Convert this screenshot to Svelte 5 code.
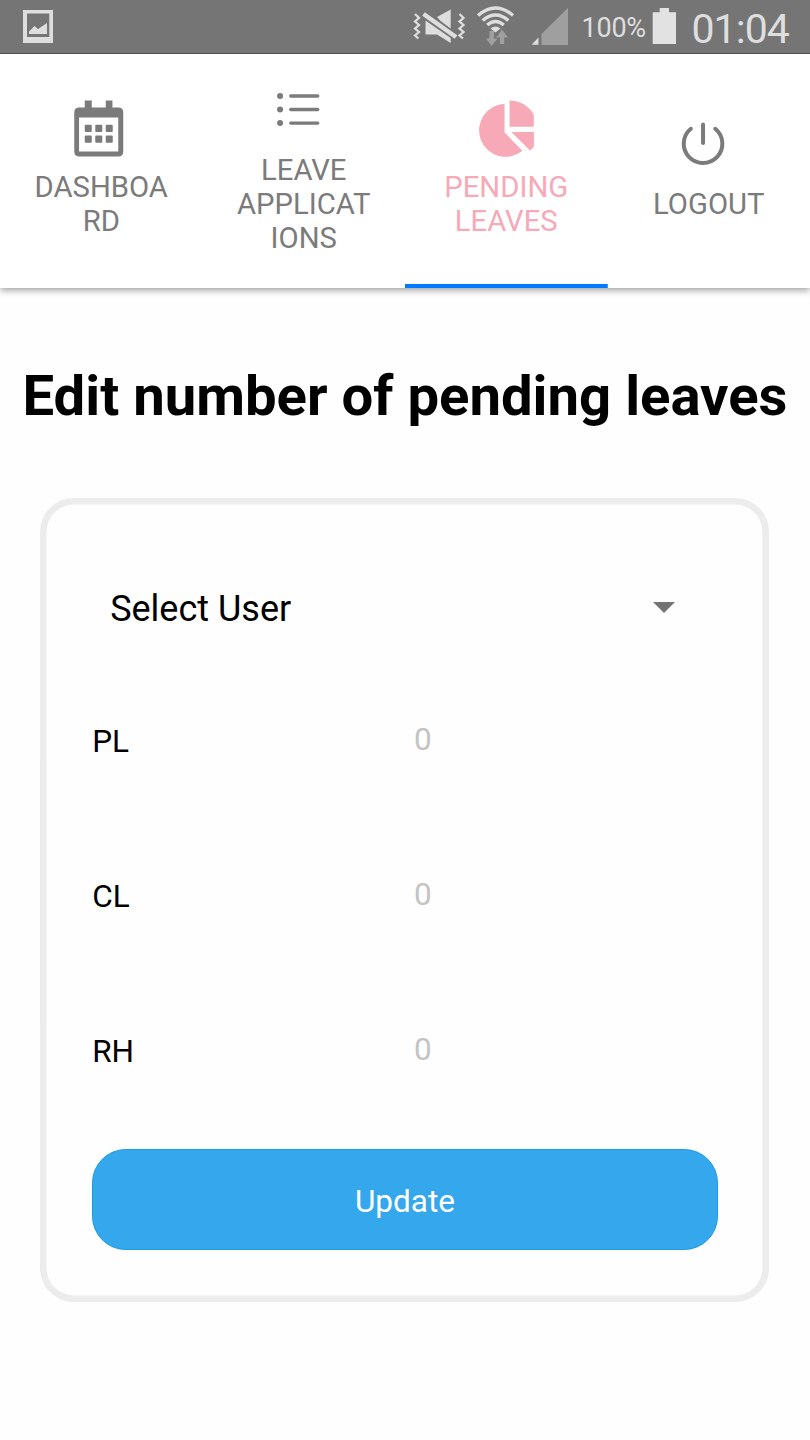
<script>
  const fields = ['PL', 'CL', 'RH'];
</script>

<div class="screen">
  <div class="status">
    <svg class="glyphs" viewBox="0 0 810 53" width="810" height="53">
      <path fill="#dedede" fill-rule="evenodd" d="M23 10H53V43H23ZM27 13.5V37H49.3V13.5Z" />
      <path fill="#dedede" d="M29 34V31.5L34.5 26L38 29L47 23V34Z" />
      <g fill="none" stroke="#dedede" stroke-width="2.300">
        <path d="M415 14L419 18L415 21.5L419 25L415 28.500L419 32L415 35.500L418.500 38.500" />
        <path d="M459.500 14L463.500 18L459.500 21.500L463.500 25L459.500 28.500L463.500 32L459.500 35.500L463 38.500" />
      </g>
      <path fill="#dedede" d="M437 17L450.700 9.500V29L444 25Z" />
      <path fill="#dedede" d="M425.500 20.500L450.700 38V43L437 34.500H425.500Z" />
      <path stroke="#757575" stroke-width="7" d="M426 14.500L455 36" />
      <path stroke="#dedede" stroke-width="4.500" d="M423.500 14L456 37" />
      <g fill="none" stroke="#dedede" stroke-width="3.400">
        <path d="M478 15.500Q495.500 0.500 513 15.500" />
        <path d="M482.700 20.500Q495.500 9.500 508.300 20.500" />
        <path d="M487.200 25Q495.500 18 503.800 25" />
      </g>
      <path fill="#dedede" d="M490.500 28.500Q495.500 24.500 500.500 28.500L495.500 32.500Z" />
      <path fill="#9f9f9f" d="M489.500 31H494V38.500H497.500L491.700 46L486 38.500H489.500ZM500 44V37.500H496.200L502 29.500L508 37.500H504.200V44Z" />
      <path fill="#9f9f9f" d="M541.500 45V34L568 8V45Z" />
      <path fill="#dedede" d="M531.500 44.700L538.500 37.500V44.700Z" />
      <path fill="#e2e2e2" d="M652.700 12.200H659.700V8H669V12.200H676V44H652.700Z" />
    </svg>
    <span class="percent">100%</span>
    <span class="clock">01:04</span>
  </div>

  <nav>
    <div class="tab">
      <svg viewBox="68.250 103.500 66 66">
        <path fill="#7b7b7b" fill-rule="evenodd" d="M85 100H92V107H106V100H112.700V107H118.500Q123.500 107 123.500 112V151Q123.500 156 118.500 156H79.500Q74.500 156 74.500 151V112Q74.500 107 79.500 107H85ZM79.300 117V151H118.500V117Z" />
        <g fill="#7b7b7b">
          {#each [85, 95.5, 106] as x}
            <rect {x} y="124.300" width="7" height="7.200" rx="1" />
            <rect {x} y="135" width="7" height="7.200" rx="1" />
          {/each}
        </g>
      </svg>
      <span>DASHBOA<br />RD</span>
    </div>
    <div class="tab">
      <svg viewBox="270.750 86.500 66 66">
        {#each [95.5, 109, 122.6] as y}
          <circle cx="279.800" cy={y} r="3" fill="#7b7b7b" />
          <path d="M290.500 {y}H317.500" stroke="#7b7b7b" stroke-width="3.300" stroke-linecap="round" />
        {/each}
      </svg>
      <span>LEAVE<br />APPLICAT<br />IONS</span>
    </div>
    <div class="tab active">
      <svg viewBox="472.650 104 66 66">
        <g fill="#f7a9b7">
          <path d="M504.200 103.800V132.500L522 150.800A26.500 26.500 0 1 1 504.200 103.800Z" />
          <path d="M509.200 100.500A27 27 0 0 1 533.500 115V126.700H509.200Z" />
          <path d="M511 132H533.500V146.500Q532 149 529.700 150.500Z" />
        </g>
      </svg>
      <span>PENDING<br />LEAVES</span>
    </div>
    <div class="tab">
      <svg viewBox="675.950 121.200 66 66">
        <path d="M690.800 129A19.300 19.300 0 1 0 715.200 129M703 124.800V143.300" fill="none" stroke="#7b7b7b" stroke-width="4" stroke-linecap="round" />
      </svg>
      <span>LOGOUT</span>
    </div>
  </nav>

  <h1>Edit number of pending leaves</h1>

  <div class="card">
    <div class="select">
      <span>Select User</span>
      <svg viewBox="0 0 22 11" width="22" height="11"><path d="M0 0H22L11 11Z" fill="#737373" /></svg>
    </div>
    {#each fields as name}
      <div class="row">
        <span class="name">{name}</span>
        <span class="value">0</span>
      </div>
    {/each}
    <button>Update</button>
  </div>
</div>

<style>
  :global(body) {
    background: #fefefe;
  }
  .screen {
    width: 810px;
    height: 1440px;
    overflow: hidden;
    background: #fefefe;
    font-family: Roboto, sans-serif;
    color: #000;
  }
  .status {
    position: relative;
    box-sizing: border-box;
    height: 54px;
    display: flex;
    justify-content: flex-end;
    align-items: center;
    gap: 45.500px;
    padding-right: 21px;
    background: #757575;
    border-bottom: 1px solid #4e4e4e;
    color: #dedede;
  }
  .glyphs {
    position: absolute;
    left: 0;
    top: 0;
  }
  .percent {
    padding-top: 2px;
    font-size: 27px;
    letter-spacing: -0.250px;
  }
  .clock {
    font-size: 41px;
    line-height: 53px;
    padding-top: 5px;
    letter-spacing: -0.900px;
  }
  nav {
    height: 234px;
    display: flex;
    background: #fff;
    box-shadow: 0 2px 7px rgba(0, 0, 0, 0.4);
  }
  .tab {
    box-sizing: border-box;
    flex: 1;
    display: flex;
    flex-direction: column;
    align-items: center;
    justify-content: center;
    text-align: center;
    font-size: 29.250px;
    line-height: 34.300px;
    color: #7b7b7b;
  }
  .tab svg {
    width: 66px;
    height: 66px;
    overflow: visible;
    flex: none;
  }
  .active {
    color: #f7a9b7;
    background: linear-gradient(#007aff, #007aff) bottom / 100% 4.500px no-repeat;
  }
  h1 {
    margin: 0;
    padding-top: 75px;
    height: 135.250px;
    font-size: 56.250px;
    line-height: 66px;
    font-weight: 700;
    text-align: center;
    white-space: nowrap;
  }
  .card {
    box-sizing: border-box;
    width: 729px;
    height: 804px;
    margin: 0 0 0 40.400px;
    padding: 33px 51.750px 0;
    border-radius: 33.750px;
    box-shadow: inset 0 0 0 6.600px #ececec;
    font-size: 31.500px;
  }
  .select {
    display: flex;
    align-items: center;
    justify-content: space-between;
    height: 153px;
    padding: 0 43px 0 18px;
    font-size: 36px;
  }
  .select span {
    padding-top: 3px;
  }
  .row {
    display: grid;
    grid-template-columns: 321.900px 1fr;
    height: 154.800px;
    line-height: 112px;
  }
  .name {
    padding-top: 2px;
  }
  .value {
    color: #c4c4c4;
  }
  button {
    display: block;
    width: 100%;
    height: 101px;
    padding: 4px 0 0;
    border: 1px solid #1b9ae8;
    border-radius: 33.750px;
    background: #35a7ec;
    color: #fff;
    font: inherit;
  }
</style>
